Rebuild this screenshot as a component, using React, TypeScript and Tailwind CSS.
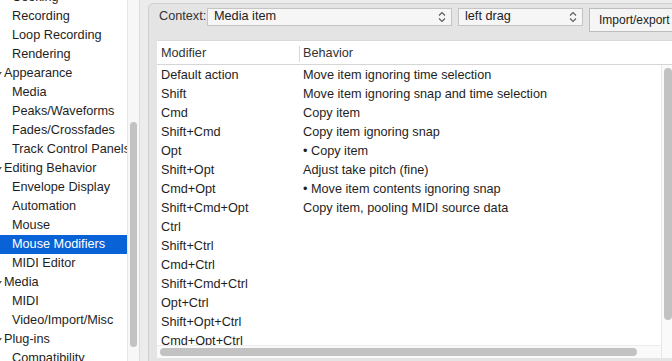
import React from "react";

const sidebar: { label: string; level: 0 | 1; selected?: boolean }[] = [
  { label: "Cooking", level: 1 },
  { label: "Recording", level: 1 },
  { label: "Loop Recording", level: 1 },
  { label: "Rendering", level: 1 },
  { label: "Appearance", level: 0 },
  { label: "Media", level: 1 },
  { label: "Peaks/Waveforms", level: 1 },
  { label: "Fades/Crossfades", level: 1 },
  { label: "Track Control Panels", level: 1 },
  { label: "Editing Behavior", level: 0 },
  { label: "Envelope Display", level: 1 },
  { label: "Automation", level: 1 },
  { label: "Mouse", level: 1 },
  { label: "Mouse Modifiers", level: 1, selected: true },
  { label: "MIDI Editor", level: 1 },
  { label: "Media", level: 0 },
  { label: "MIDI", level: 1 },
  { label: "Video/Import/Misc", level: 1 },
  { label: "Plug-ins", level: 0 },
  { label: "Compatibility", level: 1 },
];

const rows: [string, string][] = [
  ["Default action", "Move item ignoring time selection"],
  ["Shift", "Move item ignoring snap and time selection"],
  ["Cmd", "Copy item"],
  ["Shift+Cmd", "Copy item ignoring snap"],
  ["Opt", "\u2022 Copy item"],
  ["Shift+Opt", "Adjust take pitch (fine)"],
  ["Cmd+Opt", "\u2022 Move item contents ignoring snap"],
  ["Shift+Cmd+Opt", "Copy item, pooling MIDI source data"],
  ["Ctrl", ""],
  ["Shift+Ctrl", ""],
  ["Cmd+Ctrl", ""],
  ["Shift+Cmd+Ctrl", ""],
  ["Opt+Ctrl", ""],
  ["Shift+Opt+Ctrl", ""],
  ["Cmd+Opt+Ctrl", ""],
];

function UpDown() {
  return (
    <svg width="8" height="12" viewBox="0 0 8 12" className="shrink-0">
      <path d="M1 4.5 L4 1.5 L7 4.5" fill="none" stroke="#5a5a5a" strokeWidth="1.1" />
      <path d="M1 7.5 L4 10.5 L7 7.5" fill="none" stroke="#5a5a5a" strokeWidth="1.1" />
    </svg>
  );
}

function Select({ value, w }: { value: string; w: string }) {
  return (
    <div
      className={`${w} shrink-0 h-[18px] flex items-center justify-between pl-[6px] pr-[5px] border border-[#c4c4c4] bg-[#f6f6f6] text-[#222]`}
    >
      <span>{value}</span>
      <UpDown />
    </div>
  );
}

export default function App() {
  return (
    <div
      className="w-[672px] h-[361px] overflow-hidden flex bg-[#ececec] text-[12.7px] text-[#1e1e1e]"
      style={{ fontFamily: '"Liberation Sans", Arial, sans-serif' }}
    >
      {/* Sidebar */}
      <div className="w-[127px] shrink-0 bg-white overflow-hidden">
        <div className="mt-[-12px] flex flex-col">
          {sidebar.map((s, i) => (
            <div
              key={i}
              className={`h-[19px] flex items-center whitespace-nowrap ${
                s.selected ? "bg-[#0a63d6] text-white" : ""
              } ${s.level === 0 ? "pl-[4px]" : "pl-[12px]"}`}
            >
              {s.level === 0 && (
                <svg width="6" height="6" viewBox="0 0 6 6" className="ml-[-8px] mr-[2px] shrink-0">
                  <path d="M0 1 L6 1 L3 5 Z" fill="#555" />
                </svg>
              )}
              <span>{s.label}</span>
            </div>
          ))}
        </div>
      </div>
      {/* Sidebar scrollbar */}
      <div className="w-[13px] shrink-0 bg-[#f7f7f7] border-l border-[#e6e6e6] border-r border-r-[#dcdcdc] flex flex-col items-center">
        <div className="mt-[122px] h-[225px] w-[7px] rounded-full bg-[#c2c2c2]" />
      </div>
      {/* Main */}
      <div className="flex-1 pl-[8px] pt-[3px] flex flex-col min-w-0">
        <div className="flex-1 -mr-[6px] -mb-[6px] border border-[#cfcfcf] rounded-tl-[5px] bg-[#e4e4e4] flex flex-col min-h-0">
          {/* Controls */}
          <div className="flex items-start pt-[4px] pl-[10px] h-[36px] shrink-0">
            <span className="w-[48px] shrink-0 h-[18px] flex items-center text-[#333]">Context:</span>
            <Select value="Media item" w="w-[245px]" />
            <div className="w-[6px] shrink-0" />
            <Select value="left drag" w="w-[125px]" />
            <div className="ml-[6px] h-[24px] w-[100px] shrink-0 flex items-center pl-[9px] border border-[#bdbdbd] bg-[#f5f5f5] text-[#222] text-[12px] whitespace-nowrap">
              Import/export
            </div>
          </div>
          {/* Table */}
          <div className="ml-[8px] flex-1 flex flex-col bg-white border-t border-[#dadada] min-h-0">
            <div className="h-[24px] shrink-0 flex items-center pt-[2px] border-b border-[#d6d6d6]">
              <div className="w-[142px] pl-[4px] text-[#333]">Modifier</div>
              <div className="w-px h-[16px] bg-[#d8d8d8]" />
              <div className="pl-[3px] text-[#333]">Behavior</div>
            </div>
            <div className="flex-1 flex min-h-0">
              <div className="flex-1 flex flex-col overflow-hidden">
                <div className="flex-1 overflow-hidden">
                  {rows.map(([m, b], i) => (
                    <div key={i} className="h-[19px] flex items-center pt-[2px] whitespace-nowrap">
                      <div className="w-[146px] pl-[4px] shrink-0">{m}</div>
                      <div>{b}</div>
                    </div>
                  ))}
                </div>
                <div className="h-[13px] shrink-0 bg-[#fafafa] border-t border-[#ececec] flex items-center pl-[3px]">
                  <div className="w-[477px] h-[8px] rounded-full bg-[#c2c2c2]" />
                </div>
              </div>
              <div className="w-[16px] shrink-0 bg-[#fafafa] border-l border-[#e8e8e8] flex flex-col">
                <div className="ml-[2px] mt-[3px] h-[252px] w-[8px] rounded-full bg-[#c2c2c2]" />
              </div>
            </div>
            <div className="h-[8px] shrink-0 bg-[#e4e4e4]" />
          </div>
        </div>
      </div>
    </div>
  );
}
